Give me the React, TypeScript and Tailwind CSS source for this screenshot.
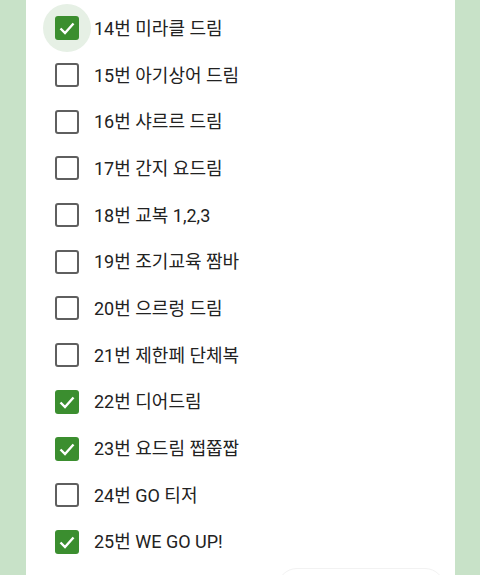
const items = [
  { label: "14번 미라클 드림", checked: true, focus: true },
  { label: "15번 아기상어 드림", checked: false },
  { label: "16번 샤르르 드림", checked: false },
  { label: "17번 간지 요드림", checked: false },
  { label: "18번 교복 1,2,3", checked: false },
  { label: "19번 조기교육 짬바", checked: false },
  { label: "20번 으르렁 드림", checked: false },
  { label: "21번 제한페 단체복", checked: false },
  { label: "22번 디어드림", checked: true },
  { label: "23번 요드림 쩝쭙짭", checked: true },
  { label: "24번 GO 티저", checked: false },
  { label: "25번 WE GO UP!", checked: true },
];

function Box({ checked }: { checked: boolean }) {
  if (checked) {
    return (
      <div className="flex h-[24px] w-[24px] items-center justify-center rounded-[3px] bg-[#3b8e2f]">
        <svg viewBox="0 0 24 24" className="h-[24px] w-[24px]" fill="none" stroke="white" strokeWidth="2.4">
          <path d="M5.5 12.5l4.5 4.5L18.5 7.5" />
        </svg>
      </div>
    );
  }
  return <div className="h-[24px] w-[24px] rounded-[3px] border-2 border-[#5f5f5f]" />;
}

export default function App() {
  return (
    <div className="flex h-[575px] w-[480px] overflow-hidden bg-[#c8e2c8]">
      <div className="ml-[26px] flex h-full w-[429px] flex-col bg-white pt-[5px]" style={{ fontFamily: "Roboto, 'Noto Sans CJK KR', sans-serif" }}>
        {items.map((it) => (
          <div key={it.label} className="flex h-[46.7px] shrink-0 items-center">
            <div className="relative ml-[29px] flex h-[24px] w-[24px] items-center justify-center">
              {it.focus && <div className="absolute left-[-12px] top-[-12px] h-[48px] w-[48px] rounded-full bg-[#e6f0e5]" />}
              <div className="relative">
                <Box checked={it.checked} />
              </div>
            </div>
            <span className="ml-[15px] text-[18px] text-[#222]">{it.label}</span>
          </div>
        ))}
        <div className="flex justify-end pr-[10px]">
          <div className="mt-[3px] h-[40px] w-[168px] rounded-[20px] border border-[#f2f2f2]" />
        </div>
      </div>
    </div>
  );
}
